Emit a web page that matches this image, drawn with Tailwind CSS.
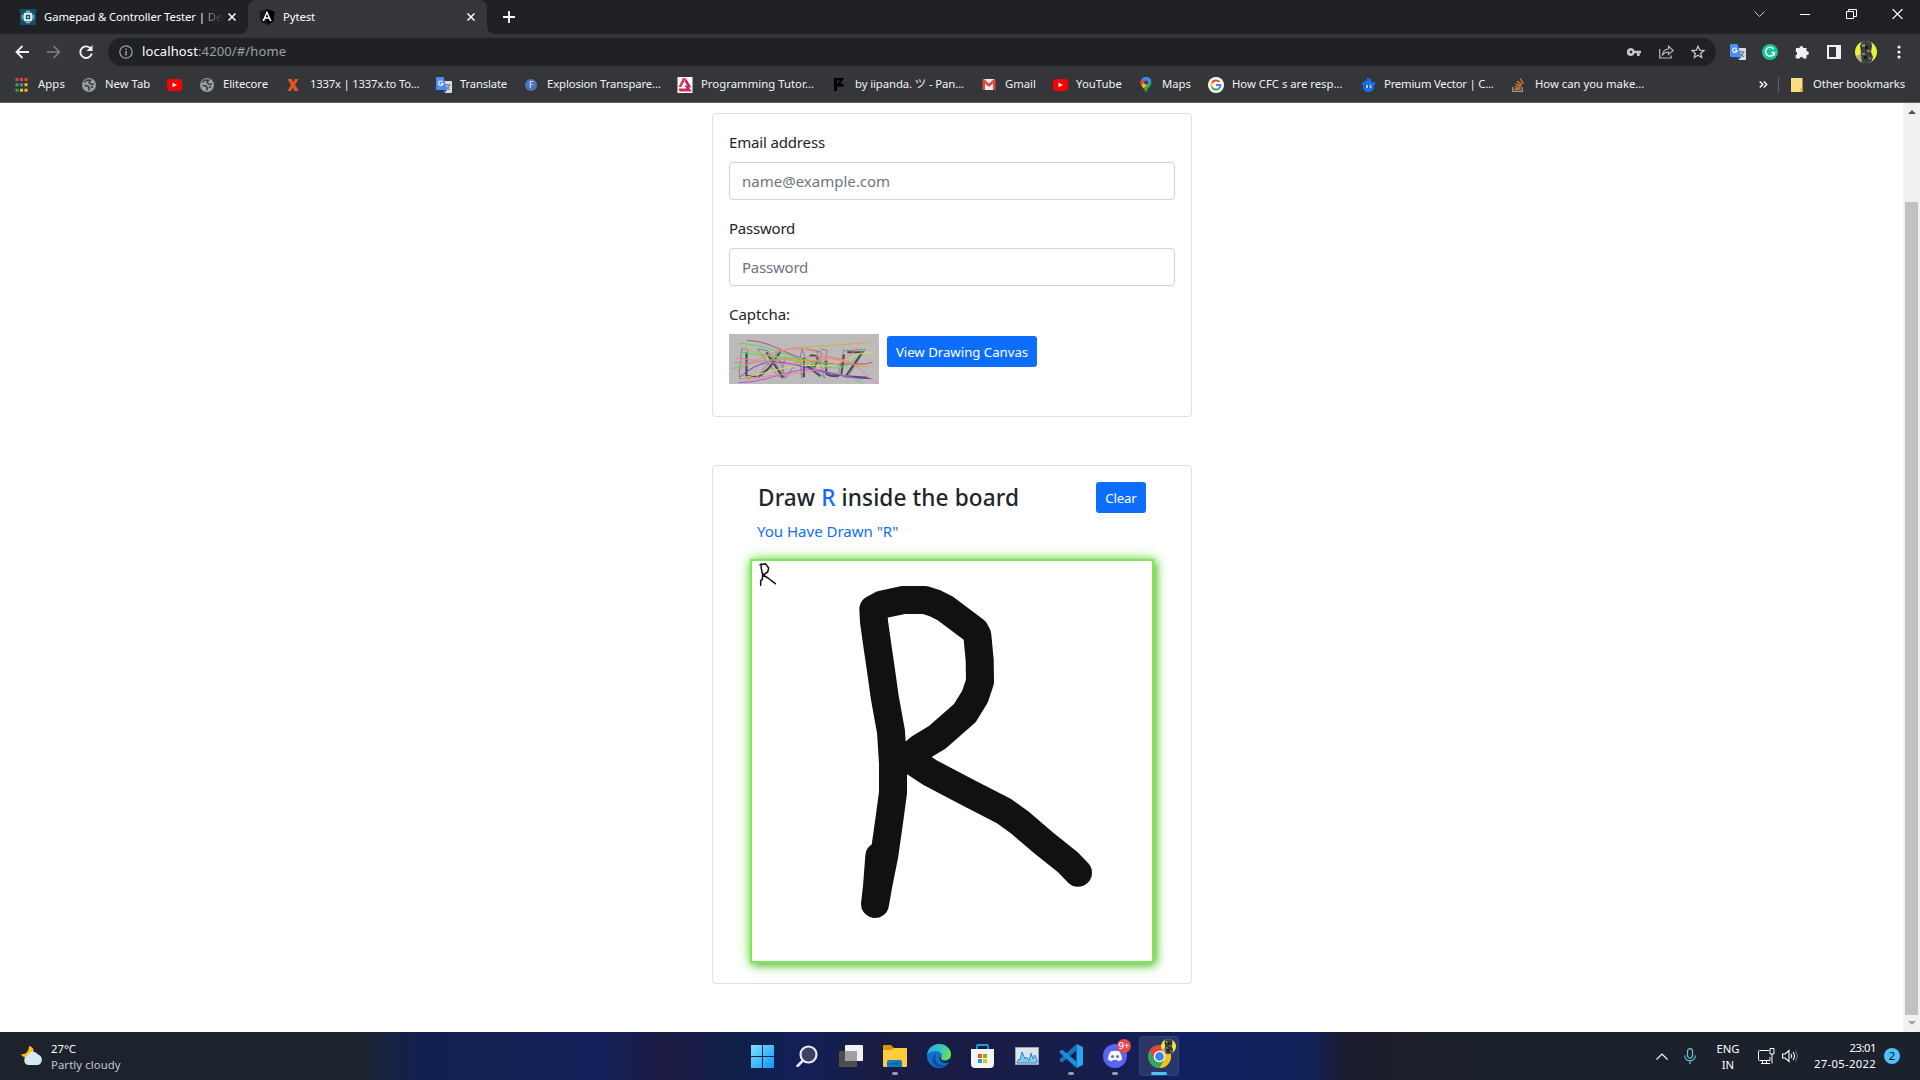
<!DOCTYPE html>
<html lang="en">
<head>
<meta charset="utf-8">
<title>Pytest</title>
<script src="https://cdn.jsdelivr.net/npm/@tailwindcss/browser@4"></script>
</head>
<body class="w-[1920px] h-[1080px] overflow-hidden bg-white flex flex-col font-['Noto_Sans','Noto_Sans_CJK_JP',sans-serif]">
<svg class="absolute size-0">
  <defs>
    <clipPath id="avc"><circle cx="11" cy="11" r="11"/></clipPath>
    <symbol id="globe" viewBox="0 0 14 14"><circle cx="7" cy="7" r="7" fill="#9aa0a6"/><path d="M2 4.500 5 2l3.500.3L7 4.500 9.500 6.500 12 6M2.500 7.500 6 8l1.500 2-1 2.500M9 9.500l2-1" fill="none" stroke="#3c3d41" stroke-width="1.600"/></symbol>
    <symbol id="yt" viewBox="0 0 15 12"><rect width="15" height="12" rx="3" fill="#f00"/><path d="M5.500 3.700v4.600L10 6z" fill="#fff"/></symbol>
    <symbol id="gtrans" viewBox="0 0 16 16"><path d="M6 4h9a1 1 0 0 1 1 1v10a1 1 0 0 1-1 1H9z" fill="#dadce0"/><path d="M9 8h5.500M11.700 7v1M13.500 8c-.5 2.500-2 4-3.500 5M10.500 9.500c.8 1.600 2 2.600 3.500 3.500" stroke="#5f6a76" fill="none"/><path d="M1 0h6.500L11.500 13H1a1 1 0 0 1-1-1V1a1 1 0 0 1 1-1z" fill="#4c8df6"/><path d="M8 16l3.500-3H7z" fill="#2a56c6"/><path d="M6.700 5A2.200 2.200 0 1 0 7 6.600H5" fill="none" stroke="#fff" stroke-width="1.100"/></symbol>
    <symbol id="avatar" viewBox="0 0 22 22"><g clip-path="url(#avc)"><rect width="22" height="22" fill="#e9f23a"/><path d="M7 0h9l1 5-1 6 2 5-2 6H6l-1-6 1-5-1-6z" fill="#3b3d40"/><path d="M0 15l6-2 1 9H2z" fill="#b9aa90"/><path d="M7 3h3v3H7zM12 9h3v2h-3zM7 12h3v2H7zM13 17l3-1v3z" fill="#8d8172"/><path d="M10 5h3v3h-3zM9 15h3v3H9z" fill="#16181c"/></g></symbol>
  </defs>
</svg>

<!-- Tab strip -->
<header class="h-[34px] bg-[#202124] flex shrink-0 text-[11.300px] text-white">
  <div class="w-[248px] flex items-center pl-[20px]">
    <svg class="size-4 mr-2 shrink-0" viewBox="0 0 15 15"><rect width="15" height="15" fill="#0e5266"/><path d="M2.500 5.500v4M12.500 5.500v4M5.500 2.500h4M5.500 12.500h4" stroke="#8fb4bf" stroke-width="1.500"/><rect x="3.500" y="3.500" width="8" height="8" rx="1" fill="#dfe9ec"/><rect x="5.500" y="5.500" width="4" height="4" fill="#0e5266"/><rect x="6.800" y="6.800" width="1.500" height="1.500" fill="#fff"/></svg>
    <div class="w-[184px] whitespace-nowrap tracking-[-0.09px]">Gamepad &amp; Controller Tester | <span class="text-transparent bg-clip-text bg-linear-to-r from-white/60 to-white/5">De</span></div>
    <svg class="size-2" viewBox="0 0 8 8"><path d="M.5.5l7 7M7.500.5l-7 7" stroke="#fff" stroke-width="1.500"/></svg>
  </div>
  <div class="relative w-[239px] bg-[#35363a] rounded-t-[8px] flex items-center pl-[11px]">
    <svg class="absolute -left-2 bottom-0 size-2" viewBox="0 0 8 8"><path d="M8 0v8H0a8 8 0 0 0 8-8z" fill="#35363a"/></svg>
    <svg class="absolute -right-2 bottom-0 size-2" viewBox="0 0 8 8"><path d="M0 0v8h8a8 8 0 0 1-8-8z" fill="#35363a"/></svg>
    <svg class="size-4 mr-2" viewBox="0 0 15 16"><path d="M7.500 0 15 2.700 13.800 12.500 7.500 16 1.200 12.500 0 2.700z" fill="#15171f"/><path d="M7.500 0 15 2.700 13.800 12.500 7.500 16z" fill="#000"/><path d="M7.500 1.700 2.900 12h1.800l.9-2.300h3.800l.9 2.300h1.800zM7.500 5.100l1.400 3.200H6.100z" fill="#fff" fill-rule="evenodd"/></svg>
    <span class="w-[184px] tracking-[-0.09px]">Pytest</span>
    <svg class="size-2" viewBox="0 0 8 8"><path d="M.5.5l7 7M7.500.5l-7 7" stroke="#fff" stroke-width="1.500"/></svg>
  </div>
  <svg class="size-3 mt-[11px] ml-[16px]" viewBox="0 0 12 12"><path d="M6 0v12M0 6h12" stroke="#fff" stroke-width="1.800"/></svg>
  <div class="ml-auto flex items-start pr-[17px] pt-[9px] text-white">
    <svg class="w-[11px] h-[11px] mr-[35px]" viewBox="0 0 11 11"><path d="M.5 2.500l5 5 5-5" fill="none" stroke="#c6c7c9"/></svg>
    <svg class="w-[10px] h-[11px] mr-[36px]" viewBox="0 0 10 11"><path d="M0 5.500h10" stroke="#fff"/></svg>
    <svg class="w-[11px] h-[10px] mr-[35px]" viewBox="0 0 11 10"><path d="M.5 2.500h7v7h-7zM2.500 2.500v-2h8v7h-3" fill="none" stroke="#fff"/></svg>
    <svg class="w-[11px] h-[10px]" viewBox="0 0 11 10"><path d="M.5 0l10 10M10.500 0l-10 10" stroke="#fff" stroke-width="1.100"/></svg>
  </div>
</header>

<!-- Address bar -->
<div class="h-[36px] bg-[#35363a] flex shrink-0 items-center pl-[15px]">
  <svg class="w-[14px] h-[14px] mr-[18px] shrink-0" viewBox="0 0 14 14"><path d="M14 7H1.500M7.500 1l-6 6 6 6" fill="none" stroke="#f1f1f1" stroke-width="1.800"/></svg>
  <svg class="w-[14px] h-[14px] mr-[18px] shrink-0" viewBox="0 0 14 14"><path d="M0 7h12.500M6.500 1l6 6-6 6" fill="none" stroke="#808184" stroke-width="1.500"/></svg>
  <svg class="w-[14px] h-[14px] mr-[15px] shrink-0" viewBox="0 0 14 14"><path d="M11.800 3.700A5.800 5.800 0 1 0 12.800 8.500" fill="none" stroke="#f1f1f1" stroke-width="1.900"/><path d="M13.500 0v6h-6z" fill="#f1f1f1"/></svg>
  <div class="w-[1608px] h-7 shrink-0 rounded-full bg-[#202124] flex items-center pl-[11px] text-[13px]">
    <svg class="size-[14px] mr-[9px]" viewBox="0 0 14 14"><circle cx="7" cy="7" r="6.200" fill="none" stroke="#9aa0a6" stroke-width="1.300"/><path d="M7 6v4.500M7 3.500v1.400" stroke="#9aa0a6" stroke-width="1.500"/></svg>
    <span class="text-[#9aa0a6] tracking-[0.12px]"><span class="text-white">localhost</span>:4200/#/home</span>
    <div class="ml-auto flex items-center pr-[11px] gap-[18px]">
      <svg class="w-[14px] h-[8px]" viewBox="0 0 14 8"><path d="M4 0a4 4 0 1 0 3.600 5.300H10V8h2.700V5.300H14V2.700H7.600A4 4 0 0 0 4 0zm0 2.700a1.300 1.300 0 1 1 0 2.600 1.300 1.300 0 0 1 0-2.600z" fill="#c4c5c7"/></svg>
      <svg class="w-[15px] h-[14px]" viewBox="0 0 15 14"><path d="M.7 4v9h11.500v-2.500" fill="none" stroke="#b6b8ba" stroke-width="1.200"/><path d="M3.500 9.800C4 6 6.500 4.200 9.500 4V1.200L14.200 5.500 9.500 9.500V7C7 7 5 7.800 3.500 9.800z" fill="none" stroke="#b6b8ba" stroke-width="1.200"/></svg>
      <svg class="size-[14px] -ml-[1px]" viewBox="0 0 14 14"><path d="M7 1.300l1.700 3.900 4.200.4-3.200 2.800 1 4.100L7 10.300l-3.700 2.200 1-4.100L1.100 5.600l4.200-.4z" fill="none" stroke="#c4c5c7" stroke-width="1.300"/></svg>
    </div>
  </div>
  <div class="flex items-center ml-[14px]">
    <svg class="size-4 mr-4"><use href="#gtrans"/></svg>
    <svg class="size-4 mr-[17px]" viewBox="0 0 16 16"><circle cx="8" cy="8" r="8" fill="#15c39a"/><path d="M11.500 5A4.400 4.400 0 1 0 12.300 8.600H9.200M12.300 8.600v3" fill="none" stroke="#fff" stroke-width="1.500"/></svg>
    <svg class="size-[14px] mr-[18px]" viewBox="0 0 14 14"><path d="M1 3h3.500a1.900 1.900 0 1 1 3.800 0H11.500v3.300a1.900 1.900 0 1 1 0 3.700v3.500H8.300a1.900 1.900 0 0 0-3.700 0H.7V10.200a1.900 1.900 0 0 0 0-3.700z" fill="#f1f1f1"/></svg>
    <svg class="size-[14px] mr-[14px]" viewBox="0 0 14 14"><path d="M0 0h14v14H0zM2 2v10h7V2z" fill="#f1f1f1" fill-rule="evenodd"/></svg>
    <svg class="size-[22px] mr-[20px]"><use href="#avatar"/></svg>
    <svg class="w-[4px] h-[14px]" viewBox="0 0 4 14"><g fill="#f1f1f1"><circle cx="2" cy="2" r="1.600"/><circle cx="2" cy="7" r="1.600"/><circle cx="2" cy="12" r="1.600"/></g></svg>
  </div>
</div>

<!-- Bookmarks bar -->
<nav class="h-[33px] bg-[#35363a] border-b border-[#5f6063] flex shrink-0 items-center pl-[15px] pb-[4px] pt-px text-[11.300px] text-[#f1f3f4] whitespace-nowrap [&_a]:flex [&_a]:items-center [&_a]:shrink-0 [&_svg]:shrink-0">
  <a class="w-[67px]"><svg class="w-[13px] h-[14px] mr-[10px]" viewBox="0 0 12 14"><g fill="#ea4335"><path d="M0 0h3v3H0zM4.500 0h3v3h-3zM9 0h3v3H9z"/></g><path d="M0 5.300h3v3H0zM0 10.700h3v3H0z" fill="#34a853"/><path d="M4.500 5.300h3v3h-3z" fill="#4285f4"/><path d="M9 5.300h3v3H9zM4.500 10.700h3v3h-3zM9 10.700h3v3H9z" fill="#fbbc04"/></svg><span class="tracking-[0.1px]">Apps</span></a>
  <a class="w-[85px]"><svg class="size-[14px] mr-[9px]"><use href="#globe"/></svg><span>New Tab</span></a>
  <a class="w-[33px]"><svg class="w-[15px] h-3"><use href="#yt"/></svg></a>
  <a class="w-[87px]"><svg class="size-[14px] mr-[9px]"><use href="#globe"/></svg><span class="tracking-[-0.07px]">Elitecore</span></a>
  <a class="w-[149px]"><svg class="w-[12px] h-3 mr-[11px]" viewBox="0 0 11 12"><path d="M0 0h4.200l1.500 3L7.500 0H11L7.700 5.700 11 12H6.900L5.300 8.600 3.500 12H0l3.300-6z" fill="#e0542a"/></svg><span class="tracking-[-0.22px]">1337x | 1337x.to To...</span></a>
  <a class="w-[89px]"><svg class="w-4 h-4 mr-[8px]"><use href="#gtrans"/></svg><span class="tracking-[-0.18px]">Translate</span></a>
  <a class="w-[152px]"><span class="size-3 rounded-full bg-[#4f74b8] text-[8px] leading-3 text-center mr-[10px]">F</span><span class="tracking-[-0.1px]">Explosion Transpare...</span></a>
  <a class="w-[157px]"><svg class="w-[16px] h-4 mr-2" viewBox="0 0 15 16"><path d="M0 0h15v16H0z" fill="#fff"/><path d="M5.500 1h3L4 10H1z" fill="#e23b4b"/><path d="M8.500 1.500l5.500 9h-3.200L7.200 4.500z" fill="#b02a6a"/><path d="M1 11.500h8L7 8.500h3l4.500 6H2z" fill="#c92e5a"/></svg><span class="tracking-[0.04px]">Programming Tutor...</span></a>
  <a class="w-[148px]"><svg class="w-[10px] h-[13px] mr-[11px]" viewBox="0 0 10 13"><path d="M0 0h10L6.500 6H10v2.500H3V13H0zM3 2.500v3.500L6 2.500z" fill="#000" fill-rule="evenodd"/></svg><span class="tracking-[-0.08px]">by iipanda. ツ - Pan...</span></a>
  <a class="w-[71px]"><svg class="w-[14px] h-[11px] mr-[9px]" viewBox="0 0 13 11"><path d="M1 0h11v11H1z" fill="#eee"/><path d="M0 11V1l1.500-1 5 4.500 5-4.500L13 1v10h-2.500V4.500l-4 3.500-4-3.500V11z" fill="#dd4b3e"/></svg><span>Gmail</span></a>
  <a class="w-[87px]"><svg class="w-[15px] h-3 mr-2"><use href="#yt"/></svg><span class="tracking-[0.05px]">YouTube</span></a>
  <a class="w-[68px]"><svg class="w-[12px] h-4 mr-[10px]" viewBox="0 0 11 16"><path d="M5.500 0A5.500 5.500 0 0 0 0 5.500c0 3.800 4.300 5.500 5.500 10.500C6.700 11 11 9.300 11 5.500A5.500 5.500 0 0 0 5.500 0z" fill="#34a853"/><path d="M5.500 0A5.500 5.500 0 0 1 10.600 3.400L6 8 1.300 2A5.500 5.500 0 0 1 5.500 0z" fill="#4285f4"/><path d="M1.300 2 4.500 4.500 1 8.500A5.400 5.400 0 0 1 1.300 2z" fill="#ea4335"/><path d="M1 8.500 4 5l3 2.500-4 4z" fill="#fbbc04"/><circle cx="5.500" cy="5.500" r="1.900" fill="#1f3d7a"/></svg><span>Maps</span></a>
  <a class="w-[153px]"><svg class="size-4 mr-[8px]" viewBox="0 0 16 16"><circle cx="8" cy="8" r="8" fill="#fff"/><g fill="none" stroke-width="2"><path d="M11.400 4.900A4.600 4.600 0 0 0 4 5.700" stroke="#ea4335"/><path d="M4 5.700a4.600 4.600 0 0 0 0 4.600" stroke="#fbbc05"/><path d="M4 10.300a4.600 4.600 0 0 0 7 1.100" stroke="#34a853"/><path d="M11 11.400A4.600 4.600 0 0 0 12.500 8H8" stroke="#4285f4"/></g></svg><span>How CFC s are resp...</span></a>
  <a class="w-[151px]"><svg class="w-[15px] h-[14px] mr-2" viewBox="0 0 15 14"><path d="M7.500 3c4 0 5.500 2 5.500 5.500S10.500 14 7.500 14 2 12 2 8.500 3.500 3 7.500 3z" fill="#1273eb"/><path d="M0 5l3-1v4zM15 5l-3-1v4zM6 0l2 1 2-1v3H6zM3 2l2 1-1 1z" fill="#1273eb"/><path d="M3.800 7.500h7.400v1.800H3.800z" fill="#35363a"/><path d="M5 7h2v3H5zM8.500 7h2v3h-2z" fill="#a8cdf8"/></svg><span class="tracking-[-0.2px]">Premium Vector | C...</span></a>
  <a><svg class="w-[13px] h-[14px] mr-[10px]" viewBox="0 0 13 14"><path d="M.7 9v4.300h9.600V9" fill="none" stroke="#9b9ea1" stroke-width="1.200"/><path d="M2.500 11h6M2.600 8.600l6 .8M3.500 5.900l5.500 2M5.300 3.100l4.600 3.700M8 .5l3.400 5" stroke="#f48024" stroke-width="1.300"/></svg><span>How can you make...</span></a>
  <div class="ml-auto flex items-center pr-[15px]">
    <svg class="w-[9px] h-[7px] mr-[10px]" viewBox="0 0 9 7"><path d="M.7.5l3 3-3 3M4.700.5l3 3-3 3" fill="none" stroke="#f1f1f1" stroke-width="1.500"/></svg>
    <div class="w-px h-4 bg-[#5f6063] mr-[12px]"></div>
    <svg class="w-[12px] h-[14px] mr-[10px]" viewBox="0 0 12 14"><path d="M0 0h11.500v14H0z" fill="#fbdf7e"/><path d="M9.500 10h2v4h-2z" fill="#e3b93c"/></svg>
    <span class="tracking-[-0.1px]">Other bookmarks</span>
  </div>
</nav>

<!-- Page -->
<main class="h-[929px] shrink-0 flex text-[#212529] text-[15px]">
  <div class="flex-1 flex flex-col items-center pt-[10px] pl-px">
    <form class="w-[480px] h-[304px] border border-[#dfdfdf] rounded-[4px] p-4">
      <label class="block h-6 leading-6 mb-2 tracking-[-0.16px]">Email address</label>
      <div class="h-[38px] border border-[#ced4da] rounded-[4px] px-3 leading-9 text-[#6c757d] mb-4">name@example.com</div>
      <label class="block h-6 leading-6 mb-2 tracking-[-0.22px]">Password</label>
      <div class="h-[38px] border border-[#ced4da] rounded-[4px] px-3 leading-9 text-[#6c757d] mb-4 tracking-[-0.22px]">Password</div>
      <label class="block h-6 leading-6 mb-2 tracking-[-0.06px]">Captcha:</label>
      <div class="flex items-start">
        <svg class="w-[150px] h-[50px] bg-[#bcbabb] mr-2" viewBox="0 0 450 150">
          <g fill="none" stroke="#6c6a72" stroke-width="2"><path d="M38 45l18 0-2 85-24 4zM85 45l32 5 50 82-20-6zM150 50l-70 84M168 70l-12 60M220 44l-8 30 6 58 10-60zM232 44l45 10-2 30-30 8 42 40M275 45l20 5-10 40 10 35M345 45l-20 88M348 50l60-4-50 80M150 72l20 60 45-65M262 50l25 82"/></g>
          <g fill="none" stroke="#4b4950" stroke-width="6"><path d="M52 55v72l30-1M155 52l-35 50-32 28M112 55l50 76M225 70v60M242 65q30-5 22 20t-30 10l40 32M292 80v40q20 12 45 2l8-60M355 55h45l-50 72 65 4"/></g>
          <g fill="none" stroke-width="3"><path d="M55 20C140 18 190 90 320 90S400 90 430 85" stroke="#d13b77"/><path d="M30 28C100 30 180 65 260 90S360 100 405 45M8 105C90 80 170 60 240 95S350 110 400 148M38 55C120 70 220 70 300 90" stroke="#3fe84a"/><path d="M170 45C260 35 340 35 422 24M35 40C100 60 190 90 270 78S360 100 425 98" stroke="#d6ae3c"/><path d="M22 132C90 130 180 85 260 95S360 50 444 54" stroke="#ead05e"/><path d="M32 130C90 80 130 75 210 95S330 130 428 134" stroke="#7b35dd"/><path d="M27 145C120 148 200 90 280 110S370 130 400 135" stroke="#b553e0"/><path d="M20 72C110 80 200 110 300 70M15 85C120 90 230 60 310 70S410 130 446 147M25 110C140 40 210 30 280 60S350 80 385 40M50 135C150 120 220 120 300 100" stroke="#f07f92"/></g>
        </svg>
        <button type="button" class="mt-[2px] pt-[2px] w-[150px] h-[31px] rounded-[3px] bg-[#0d6efd] text-white text-[13.200px] whitespace-nowrap">View Drawing Canvas</button>
      </div>
    </form>

    <section class="mt-[48px] w-[480px] h-[519px] border border-[#dfdfdf] rounded-[4px] pt-4 px-[37px]">
      <div class="flex justify-between items-start pl-2 pr-2">
        <h4 class="text-[22.600px] leading-[29px] font-medium mt-px whitespace-nowrap tracking-[0.11px]">Draw <span class="text-[#0d6efd]">R</span> inside the board</h4>
        <button type="button" class="w-[50px] h-[31px] shrink-0 pt-[2px] rounded-[3px] bg-[#0d6efd] text-white text-[13.200px] tracking-[-0.15px]">Clear</button>
      </div>
      <p class="pl-[7px] mt-[6px] h-6 leading-6 text-[#0d6efd]">You Have Drawn "R"</p>
      <div class="mt-[16px] w-[404px] h-[404px] border-2 border-[#7fe858] shadow-[2px_2px_9px_#5cb838,0_0_14px_#a0f080]">
        <svg class="size-[400px]" viewBox="36 33 1200 1200" fill="none" stroke="#111" stroke-linecap="round" stroke-linejoin="round">
          <path stroke-width="84" d="M400 178L402 215L414 300L420 340L434 440L453 545L459 640L459 728L448 810L433 915L416 1000L405 1062L411 1010L418 918M400 178L425 164L490 150L555 150L585 160L615 175L705 242L712 256L719 330L720 395L705 440L674 490L592 562L540 593L520 610L520 635L570 668L690 731L790 782L840 818L910 878L985 938L1014 968"/>
          <path stroke-width="4.500" d="M60 45L76 41L86 54L83 66L69 75L84 84L106 101M63 42L64 56L68 75L67 88L62 92L62 106"/>
        </svg>
      </div>
    </section>
  </div>
  <!-- Scrollbar -->
  <div class="w-[17px] bg-[#f1f1f1] flex flex-col items-center">
    <svg class="w-2 h-1 mt-[7px]" viewBox="0 0 8 4"><path d="M0 4l4-4 4 4z" fill="#505050"/></svg>
    <div class="w-[13px] h-[813px] mt-[88px] bg-[#c1c1c1]"></div>
    <svg class="w-2 h-1 mt-[6px]" viewBox="0 0 8 4"><path d="M0 0l4 4 4-4z" fill="#a3a3a3"/></svg>
  </div>
</main>

<!-- Taskbar -->
<footer class="relative h-12 shrink-0 flex items-center justify-between pl-[20px] pr-[20px] bg-[linear-gradient(90deg,#1c232c_0px,#1c232c_360px,#11204f_415px,#13205a_600px,#1b1b42_660px,#191c48_700px,#0e2148_735px,#121f58_800px,#191c42_880px,#171d4c_1100px,#0f2160_1190px,#112158_1310px,#1b1c2e_1345px,#1d202a_1420px,#1b222c_1500px)] text-white">
  <div class="w-[721px] flex items-center">
    <svg class="w-[24px] h-[22px] mr-[7px]" viewBox="0 0 24 22"><path d="M9 1c5 1 6 6 3 10L6 13C3 12 1 10 1 9c4 1 8-2 8-8z" fill="#fbbf14"/><path d="M8 20a5 5 0 0 1-.5-9.500A6 6 0 0 1 18 9.500 5.500 5.500 0 0 1 18 20z" fill="#d6e8f5"/></svg>
    <div class="text-[11.300px] leading-4 pt-px"><div>27°C</div><div class="text-[#c3c6ca] tracking-[0.1px]">Partly cloudy</div></div>
  </div>

  <div class="h-12 flex items-center mr-auto [&>div]:relative [&>div]:w-11 [&>div]:h-12 [&>div]:flex [&>div]:items-center [&>div]:justify-center">
    <div><svg class="size-[23px] mr-px" viewBox="0 0 23 23"><defs><linearGradient id="w" x2="1" y2="1"><stop stop-color="#80e1ff"/><stop offset="1" stop-color="#0a97f5"/></linearGradient></defs><path d="M0 0h11v11H0zM12 0h11v11H12zM0 12h11v11H0zM12 12h11v11H12z" fill="url(#w)"/></svg></div>
    <div><svg class="size-[22px]" viewBox="0 0 22 22"><circle cx="12.500" cy="9.500" r="8" fill="#3a4263" stroke="#e8eaf0" stroke-width="2.200"/><path d="M6.500 16l-5 5" stroke="#e8eaf0" stroke-width="2.500" stroke-linecap="round"/></svg></div>
    <div><svg class="w-[24px] h-[22px]" viewBox="0 0 24 22"><rect x="6" width="18" height="16" rx="1" fill="#f2f2f2"/><rect y="6" width="18" height="16" rx="1" fill="#4d4d4d"/><path d="M6 6h12v10H6z" fill="#a0a0a0"/></svg></div>
    <div><svg class="w-[24px] h-[22px]" viewBox="0 0 24 22"><path d="M0 1q0-1 1-1h7l3 3v6H0z" fill="#d9930c"/><path d="M0 5h8l3-2h12q1 0 1 1v17q0 1-1 1H1q-1 0-1-1z" fill="#fdcb3e"/><path d="M4 22v-5q0-2 2-2h11q2 0 2 2v5z" fill="#1478c6"/><path d="M8 18h7v1.500H8z" fill="#0b5796"/></svg><i class="absolute top-[40px] w-[6px] h-[3px] rounded-full bg-[#9a9ba8]"></i></div>
    <div><svg class="size-[24px]" viewBox="0 0 24 24"><defs><linearGradient id="e" x2="1" y2=".3"><stop stop-color="#2aa6e8"/><stop offset=".6" stop-color="#34c5c8"/><stop offset="1" stop-color="#66e04f"/></linearGradient></defs><circle cx="12" cy="12" r="12" fill="#1272c8"/><path d="M0 11C1 4 6 0 12 0c7 0 12 5 12 10 0 4-3 6-6 6-4 0-5-1.500-3.500-3C16 10 13 7 9 7c-4 0-8 2-9 4z" fill="url(#e)"/><path d="M9 10c-2 5 1 10 6 11 3 .5 6-.5 8-4-4 8-16 8-17.500 0C5 14 6.500 11 9 10z" fill="#0d4f9e"/><path d="M14.500 13C13 15 15 17 18 17c2 0 4-1 5.500-3 .5 2 0 4-1.500 4.500-5 2-10-1-9.500-5.500z" fill="#151f4e"/></svg></div>
    <div><svg class="w-[23px] h-[24px] mr-px" viewBox="0 0 23 24"><path d="M6 6V2q0-1 1-1h9q1 0 1 1v4" fill="none" stroke="#1e9be8" stroke-width="1.800"/><path d="M0 5h23v15q0 4-4 4H4q-4 0-4-4z" fill="#f5f5f5"/><path d="M7 10h4v4H7z" fill="#f25022"/><path d="M12 10h4v4h-4z" fill="#7fba00"/><path d="M7 15h4v4H7z" fill="#00a4ef"/><path d="M12 15h4v4h-4z" fill="#ffb900"/></svg></div>
    <div><svg class="w-[24px] h-[18px]" viewBox="0 0 24 18"><path d="M.5.5h23v17H.500z" fill="#dbe5ec" stroke="#98a5b0"/><path d="M2 15l2-3 1 1 2-8 3 7 1.500-2 2.500 4 2-8 2 6 2-4 2 5v3H2z" fill="#8dcaf0" stroke="#2f87c8" stroke-width="1"/></svg></div>
    <div><svg class="size-[24px]" viewBox="0 0 24 24"><path d="M17.500 0L24 3v18l-6.500 3z" fill="#2ba5f0"/><path d="M17.500 0v6.500L3 18.500.500 16.500 1 15z" fill="#1277bd"/><path d="M17.500 24v-6.500L3 5.500.500 7.500 1 9z" fill="#1b8fdc"/></svg><i class="absolute top-[40px] w-[6px] h-[3px] rounded-full bg-[#9a9ba8]"></i></div>
    <div><svg class="size-[24px]" viewBox="0 0 24 24"><circle cx="12" cy="12" r="12" fill="#5865f2"/><path d="M7.500 7.500Q12 6 16.500 7.500q2.500 4 2.500 8-2 1.500-4 1.800l-.8-1.300h-4.400L9 17.300Q7 17 5 15.500q0-4 2.500-8z" fill="#fff"/><circle cx="9.500" cy="12.500" r="1.500" fill="#5865f2"/><circle cx="14.500" cy="12.500" r="1.500" fill="#5865f2"/></svg><b class="absolute left-[24px] top-[7px] size-[14px] rounded-full bg-[#e8484f] text-[9.500px] leading-[14px] text-center font-medium">9+</b><i class="absolute top-[40px] w-[6px] h-[3px] rounded-full bg-[#9a9ba8]"></i></div>
    <div><span class="absolute left-[2px] top-[4px] w-[40px] h-[40px] rounded-[4px] bg-white/10 border border-white/5"></span><svg class="relative size-[23px]" viewBox="0 0 24 24"><circle cx="12" cy="12" r="12" fill="#34a853"/><path d="M1.600 6A12 12 0 0 1 22.400 6H12l-5.200 9z" fill="#ea4335"/><path d="M22.400 6A12 12 0 0 1 12 24l5.200-9L12 6z" fill="#fbc116"/><circle cx="12" cy="12" r="6" fill="#fff"/><circle cx="12" cy="12" r="4.600" fill="#3b82f0"/></svg><svg class="absolute left-[24px] top-[7px] size-[15px]" viewBox="0 0 22 22"><use href="#avatar"/></svg><i class="absolute top-[40px] w-4 h-[3px] rounded-full bg-[#4cc2ff]"></i></div>
  </div>

  <div class="h-12 flex items-center text-[11.300px] leading-4">
    <svg class="w-[12px] h-[7px] mr-[16px]" viewBox="0 0 12 7"><path d="M.5 6.500L6 1l5.500 5.500" fill="none" stroke="#fff" stroke-width="1.200"/></svg>
    <svg class="w-[12px] h-[16px] mr-[20px]" viewBox="0 0 12 16"><rect x="3.500" y=".6" width="5" height="9.500" rx="2.500" fill="none" stroke="#6fc3d8" stroke-width="1.200"/><path d="M.7 7.500c0 7 10.600 7 10.600 0M6 12.800V16" fill="none" stroke="#6fc3d8" stroke-width="1.200"/></svg>
    <div class="text-center w-[24px] mr-[18px] whitespace-nowrap pt-px"><div>ENG</div><div>IN</div></div>
    <svg class="w-[17px] h-[17px] mr-[7px]" viewBox="0 0 17 17"><path d="M11 2.500H1.500q-1 0-1 1v8q0 1 1 1H12V9M4.500 12.500v3M8.500 12.500v3M3 15.500h9M12 .5h4v5.500h-4zM14 6v9.500" fill="none" stroke="#fff"/></svg>
    <svg class="w-[16px] h-[14px] mr-[16px]" viewBox="0 0 16 14"><path d="M.6 5h2.500L7 1.500v11L3.100 9H.6z" fill="none" stroke="#fff" stroke-width="1.100"/><path d="M9 5q1.500 2 0 4M11 3q3 4 0 8" fill="none" stroke="#fff" stroke-width="1.100"/><path d="M13.300 1.500q4 5.500 0 11" fill="none" stroke="#777c86"/></svg>
    <div class="text-right w-[62px] mr-[8px] whitespace-nowrap"><div class="tracking-[-0.5px]">23:01</div><div class="tracking-[0.3px]">27-05-2022</div></div>
    <span class="size-4 rounded-full bg-[#4cc2ff] text-black text-[11px] text-center leading-4">2</span>
  </div>
</footer>
</body>
</html>
